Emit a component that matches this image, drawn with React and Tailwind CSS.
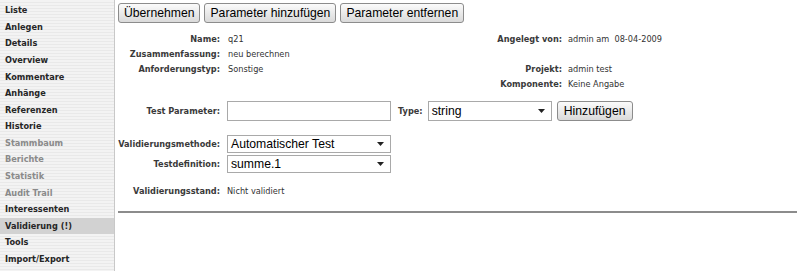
import React from 'react';

const navItems = [
  { label: 'Liste' },
  { label: 'Anlegen' },
  { label: 'Details' },
  { label: 'Overview' },
  { label: 'Kommentare' },
  { label: 'Anhänge' },
  { label: 'Referenzen' },
  { label: 'Historie' },
  { label: 'Stammbaum', muted: true },
  { label: 'Berichte', muted: true },
  { label: 'Statistik', muted: true },
  { label: 'Audit Trail', muted: true },
  { label: 'Interessenten' },
  { label: 'Validierung (!)', active: true },
  { label: 'Tools' },
  { label: 'Import/Export' },
];

const verdana = "font-['DejaVu_Sans',Verdana,sans-serif]";
const arial = "font-['Liberation_Sans',Arial,sans-serif]";

const Button = ({ children, className = '' }) => (
  <button
    type="button"
    className={`h-[20px] px-[5px] border border-[#8c8c8c] rounded-[3px] bg-gradient-to-b from-[#fbfbfb] to-[#dadada] text-[12.2px] leading-none text-black ${arial} ${className}`}
  >
    {children}
  </button>
);

const Select = ({ value, className = '' }) => (
  <div
    className={`flex items-center justify-between border border-[#a9a9a9] bg-white pl-[3px] pr-[6px] text-[12.2px] leading-none text-black ${arial} ${className}`}
  >
    <span>{value}</span>
    <svg width="7" height="4" viewBox="0 0 7 4">
      <path d="M0 0h7L3.5 4z" fill="#222" />
    </svg>
  </div>
);

const Label = ({ children, className = '' }) => (
  <span className={`font-bold text-[#3a3a3a] text-right ${className}`}>{children}</span>
);

const App = () => {
  return (
    <div className={`flex w-[800px] h-[271px] bg-white overflow-hidden text-[8.2px] ${verdana}`}>
      <div className="w-[115px] shrink-0 border-r border-[#c8c8c8] pt-[2px] bg-[repeating-linear-gradient(to_bottom,#f3f3f3_0px,#f3f3f3_2px,#e9e9e9_2px,#e9e9e9_3px)]">
        {navItems.map((item) => (
          <div
            key={item.label}
            className={`h-[16.6px] flex items-center pl-[5px] font-bold ${
              item.active ? 'bg-[#d2d2d2]' : ''
            } ${item.muted ? 'text-[#8a8a8a]' : 'text-[#262626]'}`}
          >
            {item.label}
          </div>
        ))}
      </div>

      <div className="flex-1 pl-[3px] pr-[3px] pt-[3px]">
        <div className="flex gap-[4px]">
          <Button>Übernehmen</Button>
          <Button>Parameter hinzufügen</Button>
          <Button>Parameter entfernen</Button>
        </div>

        <div className="mt-[9px] grid grid-cols-[102px_242px_100px_auto] auto-rows-[15px] items-center text-[#333]">
          <Label>Name:</Label>
          <span className="pl-[8px]">q21</span>
          <Label>Angelegt von:</Label>
          <span className="pl-[6px]">admin am&nbsp; 08-04-2009</span>

          <Label>Zusammenfassung:</Label>
          <span className="pl-[8px]">neu berechnen</span>
          <span />
          <span />

          <Label>Anforderungstyp:</Label>
          <span className="pl-[8px]">Sonstige</span>
          <Label>Projekt:</Label>
          <span className="pl-[6px]">admin test</span>

          <span />
          <span />
          <Label>Komponente:</Label>
          <span className="pl-[6px]">Keine Angabe</span>
        </div>

        <div className="mt-[9px] flex items-center">
          <Label className="w-[102px]">Test Parameter:</Label>
          <div className="ml-[7px] w-[164px] h-[20px] border border-[#a9a9a9] bg-white" />
          <Label className="ml-[7px]">Type:</Label>
          <Select value="string" className="ml-[5px] w-[124px] h-[20px]" />
          <Button className="ml-[5px] h-[19px] w-[76px] px-0">Hinzufügen</Button>
        </div>

        <div className="mt-[14px] flex items-center">
          <Label className="w-[102px]">Validierungsmethode:</Label>
          <Select value="Automatischer Test" className="ml-[7px] w-[164px] h-[18px]" />
        </div>
        <div className="mt-[2px] flex items-center">
          <Label className="w-[102px]">Testdefinition:</Label>
          <Select value="summe.1" className="ml-[7px] w-[164px] h-[18px]" />
        </div>

        <div className="mt-[11px] flex items-center h-[15px] text-[#333]">
          <Label className="w-[102px]">Validierungsstand:</Label>
          <span className="ml-[7px]">Nicht validiert</span>
        </div>

        <div className="mt-[12px] h-[2px] bg-[#8c8c8c]" />
      </div>
    </div>
  );
};

export default App;
